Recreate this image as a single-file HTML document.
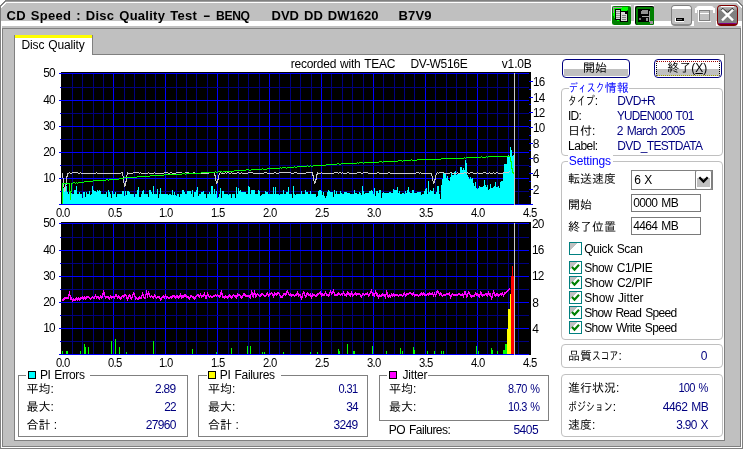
<!DOCTYPE html>
<html lang="ja"><head><meta charset="utf-8"><title>CD Speed : Disc Quality Test</title>
<style>
html,body{margin:0;padding:0;}
body{width:743px;height:449px;position:relative;overflow:hidden;background:#fff;font-family:'Liberation Sans','IPAGothic',sans-serif;font-size:12px;}
.abs,.t,.chart,#win div,#win svg{position:absolute;}
.t{white-space:pre;display:block;}
.k{display:inline-block;transform-origin:0 50%;}
#win{position:absolute;left:0;top:0;width:743px;height:449px;background:#c0c0c0;overflow:hidden;}
.grp{border:1px solid #c0c0c0;border-radius:4px;box-sizing:border-box;}
.sq{border:1px solid #808080;box-sizing:border-box;}
.lg{background:#fff;height:13px;}
.btn{box-sizing:border-box;border:1px solid #000080;border-radius:4px;background:#fff;overflow:hidden;}
.btn i{position:absolute;left:1px;right:1px;top:9px;height:7px;background:#c0c0c0;}
.inp{box-sizing:border-box;border:1px solid #7a7a7a;background:#fff;}
.cb{box-sizing:border-box;width:13px;height:13px;border:1px solid #008080;background:linear-gradient(135deg,#c0c0c0 0,#c0c0c0 32%,#fff 33%);}
</style></head><body>
<div id="win">
<div style="left:0;top:0;width:743px;height:1px;background:#808080"></div>
<div style="left:0;top:1px;width:743px;height:1px;background:#a0a0a0"></div>
<div style="left:0;top:2px;width:743px;height:1px;background:#fff"></div>
<div style="left:0;top:0;width:1px;height:449px;background:#808080"></div>
<div style="left:742px;top:0;width:1px;height:449px;background:#808080"></div>
<div style="left:1px;top:25px;width:1px;height:423px;background:#fff"></div>
<div style="left:741px;top:25px;width:1px;height:423px;background:#fff"></div>
<div style="left:0;top:448px;width:743px;height:1px;background:#808080"></div>
<div style="left:1px;top:447px;width:741px;height:1px;background:#fff"></div>
<div style="left:1px;top:21px;width:741px;height:5px;background:#fff"></div>
<div style="left:2px;top:28px;width:739px;height:419px;border:1px solid #808080;box-sizing:border-box"></div>
<div id="page" style="left:14px;top:54px;width:711px;height:387px;background:#fff;border:1px solid #808080;box-sizing:border-box"></div>
<div id="tab" style="left:14px;top:35px;width:79px;height:20px;background:#fff;border-left:1px solid #808080;border-right:1px solid #808080;box-sizing:border-box"></div>
<div style="left:15px;top:35px;width:77px;height:3px;background:#ffff00"></div>

<svg style="left:611px;top:5px" width="21" height="21" viewBox="0 0 21 21" shape-rendering="crispEdges">
 <path d="M0 0H20V1H1V20H0Z" fill="#fff"/>
 <rect x="1" y="1" width="19" height="19" rx="2.5" fill="#008000" shape-rendering="auto"/>
 <path d="M2 2H17V5H16V13H13V14H8V16H6V15H4V13H3V11H2Z" fill="#00ff00"/>
 <path d="M2 2H11V3H3V8H2Z" fill="#a090a0"/>
 <rect x="4" y="4" width="6" height="11" fill="#000"/>
 <rect x="5" y="5" width="4" height="9" fill="#d8d8d8"/>
 <path d="M5 6H9M5 8H9M5 10H9M5 12H9" stroke="#909090" stroke-width="1" transform="translate(0,0.5)"/>
 <rect x="9" y="6" width="8" height="11" fill="#000"/>
 <path d="M10 7H14V9H16V16H10Z" fill="#d8d8d8"/>
 <path d="M11 10H15M11 12H15M11 14H15" stroke="#808080" stroke-width="1" transform="translate(0,0.5)"/>
</svg>
<svg style="left:634px;top:5px" width="21" height="21" viewBox="0 0 21 21" shape-rendering="crispEdges">
 <path d="M0 0H20V1H1V20H0Z" fill="#fff"/>
 <rect x="1" y="1" width="19" height="19" rx="2" fill="#000" shape-rendering="auto"/>
 <rect x="2" y="2" width="18" height="18" rx="2" fill="#008000" shape-rendering="auto"/>
 <rect x="4" y="4" width="12" height="13" fill="#000"/>
 <path d="M8 5H14V9H7V6H8Z" fill="#909090"/>
 <rect x="8" y="11" width="8" height="1" fill="#a0a0a0"/>
 <rect x="15" y="6" width="1" height="11" fill="#a0a0a0"/>
 <rect x="5" y="13" width="2" height="2" fill="#707070"/>
 <rect x="12" y="13" width="2" height="3" fill="#909090"/>
 <rect x="16" y="16" width="3" height="3" fill="#a090a0"/>
</svg>
<!-- minimise -->
<div style="left:671px;top:5px;width:21px;height:21px;background:#c0c0c0;border:1px solid #808080;border-bottom:2px solid #8c8c8c;border-radius:4px;box-sizing:border-box;overflow:hidden"><div style="left:0;top:0;width:19px;height:3px;background:#fff"></div></div>
<div style="left:675px;top:18px;width:9px;height:4px;background:#fff"></div>
<div style="left:676px;top:18px;width:8px;height:3px;background:#000"></div>
<div style="left:677px;top:19px;width:5px;height:1px;background:#707070"></div>
<!-- maximise (disabled) -->
<div style="left:694px;top:5px;width:22px;height:21px;background:#c0c0c0"></div>
<div style="left:696px;top:6px;width:18px;height:4px;background:#fff;border-radius:3px 3px 0 0"></div>
<div style="left:695px;top:8px;width:2px;height:5px;background:#fff"></div>
<div style="left:713px;top:8px;width:2px;height:5px;background:#fff"></div>
<div style="left:698px;top:10px;width:13px;height:12px;background:#fff"></div>
<div style="left:699px;top:10px;width:12px;height:11px;background:#c0c0c0"></div>
<div style="left:699px;top:10px;width:11px;height:11px;border:1px solid #808080;box-sizing:border-box"></div>
<div style="left:700px;top:13px;width:9px;height:1px;background:#fff"></div>
<!-- close -->
<div style="left:717px;top:5px;width:21px;height:21px;background:linear-gradient(#c4c4c4 0,#a0a0a0 3px,#808080 5px);border:1px solid #800000;border-bottom-width:2px;border-radius:4px;box-sizing:border-box;overflow:hidden"><div style="left:3px;top:0;width:13px;height:1px;background:#fff"></div><div style="left:0;top:17px;width:19px;height:1px;background:#800080"></div></div>
<svg style="left:717px;top:5px" width="21" height="21" viewBox="0 0 21 21"><path d="M5 4.6 L9.5 9 M16 4.6 L11.5 9" stroke="#000" stroke-width="2.3" fill="none" transform="translate(0,-0.9)"/><path d="M5 4.6 L16 15.4 M16 4.6 L5 15.4" stroke="#fff" stroke-width="2.3" fill="none"/></svg>

<svg class="chart" width="743" height="449" viewBox="0 0 743 449" shape-rendering="crispEdges">
<rect x="61" y="72" width="470" height="133" fill="#000"/>
<rect x="61" y="222" width="470" height="133" fill="#000"/>
<rect x="72" y="73" width="1" height="131" fill="#000080"/>
<rect x="82" y="73" width="1" height="131" fill="#000080"/>
<rect x="93" y="73" width="1" height="131" fill="#000080"/>
<rect x="103" y="73" width="1" height="131" fill="#000080"/>
<rect x="113" y="73" width="1" height="131" fill="#0000ff"/>
<rect x="124" y="73" width="1" height="131" fill="#000080"/>
<rect x="134" y="73" width="1" height="131" fill="#000080"/>
<rect x="145" y="73" width="1" height="131" fill="#000080"/>
<rect x="155" y="73" width="1" height="131" fill="#000080"/>
<rect x="165" y="73" width="1" height="131" fill="#0000ff"/>
<rect x="176" y="73" width="1" height="131" fill="#000080"/>
<rect x="186" y="73" width="1" height="131" fill="#000080"/>
<rect x="196" y="73" width="1" height="131" fill="#000080"/>
<rect x="207" y="73" width="1" height="131" fill="#000080"/>
<rect x="217" y="73" width="1" height="131" fill="#0000ff"/>
<rect x="228" y="73" width="1" height="131" fill="#000080"/>
<rect x="238" y="73" width="1" height="131" fill="#000080"/>
<rect x="248" y="73" width="1" height="131" fill="#000080"/>
<rect x="259" y="73" width="1" height="131" fill="#000080"/>
<rect x="269" y="73" width="1" height="131" fill="#0000ff"/>
<rect x="279" y="73" width="1" height="131" fill="#000080"/>
<rect x="290" y="73" width="1" height="131" fill="#000080"/>
<rect x="300" y="73" width="1" height="131" fill="#000080"/>
<rect x="311" y="73" width="1" height="131" fill="#000080"/>
<rect x="321" y="73" width="1" height="131" fill="#0000ff"/>
<rect x="331" y="73" width="1" height="131" fill="#000080"/>
<rect x="342" y="73" width="1" height="131" fill="#000080"/>
<rect x="352" y="73" width="1" height="131" fill="#000080"/>
<rect x="363" y="73" width="1" height="131" fill="#000080"/>
<rect x="373" y="73" width="1" height="131" fill="#0000ff"/>
<rect x="383" y="73" width="1" height="131" fill="#000080"/>
<rect x="394" y="73" width="1" height="131" fill="#000080"/>
<rect x="404" y="73" width="1" height="131" fill="#000080"/>
<rect x="414" y="73" width="1" height="131" fill="#000080"/>
<rect x="425" y="73" width="1" height="131" fill="#0000ff"/>
<rect x="435" y="73" width="1" height="131" fill="#000080"/>
<rect x="446" y="73" width="1" height="131" fill="#000080"/>
<rect x="456" y="73" width="1" height="131" fill="#000080"/>
<rect x="466" y="73" width="1" height="131" fill="#000080"/>
<rect x="477" y="73" width="1" height="131" fill="#0000ff"/>
<rect x="487" y="73" width="1" height="131" fill="#000080"/>
<rect x="497" y="73" width="1" height="131" fill="#000080"/>
<rect x="508" y="73" width="1" height="131" fill="#000080"/>
<rect x="518" y="73" width="1" height="131" fill="#000080"/>
<rect x="61" y="73" width="468" height="1" fill="#0000ff"/>
<rect x="59" y="73" width="2" height="1" fill="#0000ff"/>
<rect x="61" y="87" width="468" height="1" fill="#000080"/>
<rect x="60" y="87" width="1" height="1" fill="#0000ff"/>
<rect x="61" y="100" width="468" height="1" fill="#0000ff"/>
<rect x="59" y="100" width="2" height="1" fill="#0000ff"/>
<rect x="61" y="113" width="468" height="1" fill="#000080"/>
<rect x="60" y="113" width="1" height="1" fill="#0000ff"/>
<rect x="61" y="126" width="468" height="1" fill="#0000ff"/>
<rect x="59" y="126" width="2" height="1" fill="#0000ff"/>
<rect x="61" y="139" width="468" height="1" fill="#000080"/>
<rect x="60" y="139" width="1" height="1" fill="#0000ff"/>
<rect x="61" y="152" width="468" height="1" fill="#0000ff"/>
<rect x="59" y="152" width="2" height="1" fill="#0000ff"/>
<rect x="61" y="165" width="468" height="1" fill="#000080"/>
<rect x="60" y="165" width="1" height="1" fill="#0000ff"/>
<rect x="61" y="178" width="468" height="1" fill="#0000ff"/>
<rect x="59" y="178" width="2" height="1" fill="#0000ff"/>
<rect x="61" y="191" width="468" height="1" fill="#000080"/>
<rect x="60" y="191" width="1" height="1" fill="#0000ff"/>
<rect x="61" y="204" width="468" height="1" fill="#0000ff"/>
<rect x="59" y="204" width="2" height="1" fill="#0000ff"/>
<rect x="529" y="204" width="4" height="1" fill="#0000ff"/>
<rect x="529" y="196" width="2" height="1" fill="#0000ff"/>
<rect x="529" y="189" width="4" height="1" fill="#0000ff"/>
<rect x="529" y="181" width="2" height="1" fill="#0000ff"/>
<rect x="529" y="173" width="4" height="1" fill="#0000ff"/>
<rect x="529" y="166" width="2" height="1" fill="#0000ff"/>
<rect x="529" y="158" width="4" height="1" fill="#0000ff"/>
<rect x="529" y="150" width="2" height="1" fill="#0000ff"/>
<rect x="529" y="143" width="4" height="1" fill="#0000ff"/>
<rect x="529" y="135" width="2" height="1" fill="#0000ff"/>
<rect x="529" y="127" width="4" height="1" fill="#0000ff"/>
<rect x="529" y="120" width="2" height="1" fill="#0000ff"/>
<rect x="529" y="112" width="4" height="1" fill="#0000ff"/>
<rect x="529" y="104" width="2" height="1" fill="#0000ff"/>
<rect x="529" y="97" width="4" height="1" fill="#0000ff"/>
<rect x="529" y="89" width="2" height="1" fill="#0000ff"/>
<rect x="529" y="81" width="4" height="1" fill="#0000ff"/>
<path d="M63 204V188H64V189H65V184H66V186H67V192H68V194H69V185H70V195H71V193H72V194H73V194H74V190H75V190H76V186H77V194H78V194H79V192H80V194H81V194H82V198H83V192H84V192H85V197H86V192H87V194H88V194H89V191H90V195H91V194H92V186H93V190H94V191H95V191H96V192H97V190H98V191H99V190H100V191H101V194H102V194H103V194H104V194H105V194H106V192H107V197H108V190H109V192H110V194H111V198H112V191H113V194H114V194H115V192H116V197H117V194H118V194H119V194H120V194H121V194H122V191H123V191H124V196H125V191H126V195H127V191H128V191H129V192H130V194H131V194H132V194H133V194H134V197H135V194H136V194H137V190H138V187H139V197H140V197H141V194H142V191H143V190H144V194H145V194H146V194H147V194H148V197H149V190H150V190H151V192H152V194H153V186H154V194H155V194H156V194H157V189H158V198H159V194H160V188H161V194H162V194H163V194H164V194H165V194H166V194H167V194H168V195H169V194H170V194H171V195H172V190H173V195H174V192H175V195H176V196H177V194H178V194H179V197H180V194H181V194H182V190H183V190H184V192H185V194H186V194H187V191H188V191H189V191H190V191H191V194H192V190H193V197H194V192H195V192H196V190H197V187H198V196H199V194H200V194H201V192H202V192H203V191H204V194H205V194H206V198H207V194H208V194H209V192H210V194H211V186H212V186H213V194H214V189H215V194H216V191H217V198H218V197H219V194H220V188H221V198H222V191H223V191H224V194H225V194H226V194H227V194H228V195H229V194H230V194H231V198H232V194H233V194H234V194H235V198H236V187H237V194H238V188H239V191H240V190H241V192H242V192H243V192H244V192H245V192H246V194H247V194H248V186H249V187H250V194H251V190H252V190H253V190H254V190H255V194H256V194H257V194H258V190H259V191H260V196H261V195H262V194H263V194H264V194H265V191H266V192H267V192H268V194H269V194H270V194H271V194H272V194H273V187H274V194H275V187H276V194H277V194H278V194H279V195H280V194H281V194H282V194H283V190H284V194H285V194H286V192H287V192H288V187H289V194H290V194H291V194H292V198H293V186H294V194H295V195H296V194H297V194H298V194H299V194H300V194H301V191H302V194H303V194H304V194H305V190H306V192H307V192H308V194H309V194H310V191H311V194H312V194H313V194H314V194H315V194H316V197H317V196H318V191H319V190H320V190H321V191H322V195H323V192H324V196H325V198H326V196H327V192H328V190H329V191H330V192H331V192H332V192H333V197H334V190H335V194H336V191H337V194H338V194H339V194H340V191H341V193H342V194H343V194H344V192H345V192H346V192H347V193H348V193H349V193H350V194H351V194H352V194H353V194H354V190H355V193H356V193H357V194H358V194H359V192H360V193H361V195H362V186H363V191H364V194H365V193H366V193H367V193H368V193H369V191H370V191H371V190H372V191H373V194H374V188H375V196H376V191H377V191H378V193H379V190H380V190H381V198H382V193H383V192H384V193H385V193H386V193H387V193H388V193H389V192H390V192H391V193H392V193H393V189H394V190H395V190H396V190H397V187H398V193H399V191H400V194H401V194H402V193H403V193H404V194H405V191H406V193H407V190H408V187H409V192H410V193H411V193H412V190H413V190H414V193H415V193H416V193H417V192H418V192H419V192H420V192H421V195H422V194H423V194H424V191H425V189H426V188H427V194H428V181H429V192H430V190H431V191H432V191H433V188H434V194H435V194H436V192H437V186H438V186H439V194H440V199H441V185H442V179H443V173H444V173H445V174H446V178H447V176H448V180H449V181H450V177H451V173H452V175H453V175H454V172H455V171H456V175H457V174H458V173H459V174H460V167H461V167H462V170H463V168H464V170H465V160H466V163H467V175H468V177H469V179H470V177H471V179H472V178H473V183H474V186H475V182H476V188H477V189H478V188H479V186H480V187H481V187H482V187H483V186H484V180H485V185H486V187H487V185H488V190H489V189H490V184H491V188H492V188H493V187H494V186H495V182H496V187H497V187H498V186H499V188H500V182H501V181H502V181H503V173H504V164H505V164H506V164H507V156H508V155H509V156H510V147H511V150H512V156H513V155H514V156H515V204Z" fill="#00ffff"/>
<path d="M62 173h1v5h-1zM63 178h1v9h-1zM64 187h1v5h-1zM65 185h1v6h-1zM66 176h1v9h-1zM67 173h1v4h-1zM68 173h1v1h-1zM69 172h1v1h-1zM70 173h1v1h-1zM71 173h1v1h-1zM72 172h1v1h-1zM73 172h1v1h-1zM74 172h1v1h-1zM75 172h1v1h-1zM76 172h1v1h-1zM77 172h1v1h-1zM78 173h1v1h-1zM79 173h1v1h-1zM80 172h1v1h-1zM81 173h1v1h-1zM82 173h1v1h-1zM83 173h1v1h-1zM84 173h1v1h-1zM85 173h1v1h-1zM86 173h1v1h-1zM87 173h1v1h-1zM88 173h1v1h-1zM89 173h1v1h-1zM90 173h1v1h-1zM91 173h1v1h-1zM92 173h1v1h-1zM93 173h1v1h-1zM94 173h1v1h-1zM95 173h1v1h-1zM96 172h1v1h-1zM97 173h1v1h-1zM98 173h1v1h-1zM99 173h1v1h-1zM100 173h1v1h-1zM101 173h1v1h-1zM102 173h1v1h-1zM103 173h1v1h-1zM104 173h1v1h-1zM105 173h1v1h-1zM106 173h1v1h-1zM107 173h1v1h-1zM108 173h1v1h-1zM109 173h1v1h-1zM110 173h1v1h-1zM111 173h1v1h-1zM112 173h1v1h-1zM113 173h1v1h-1zM114 173h1v1h-1zM115 173h1v1h-1zM116 173h1v1h-1zM117 173h1v1h-1zM118 173h1v1h-1zM119 173h1v1h-1zM120 173h1v1h-1zM121 172h1v1h-1zM122 172h1v4h-1zM123 176h1v7h-1zM124 183h1v4h-1zM125 181h1v5h-1zM126 175h1v7h-1zM127 172h1v3h-1zM128 173h1v1h-1zM129 173h1v1h-1zM130 173h1v1h-1zM131 173h1v1h-1zM132 173h1v1h-1zM133 172h1v1h-1zM134 172h1v1h-1zM135 172h1v1h-1zM136 172h1v1h-1zM137 172h1v1h-1zM138 172h1v1h-1zM139 173h1v1h-1zM140 172h1v1h-1zM141 173h1v1h-1zM142 173h1v1h-1zM143 173h1v1h-1zM144 173h1v1h-1zM145 173h1v1h-1zM146 173h1v1h-1zM147 173h1v1h-1zM148 172h1v1h-1zM149 173h1v1h-1zM150 173h1v1h-1zM151 173h1v1h-1zM152 173h1v1h-1zM153 173h1v1h-1zM154 172h1v1h-1zM155 173h1v1h-1zM156 173h1v1h-1zM157 173h1v1h-1zM158 173h1v1h-1zM159 173h1v1h-1zM160 173h1v1h-1zM161 173h1v1h-1zM162 173h1v1h-1zM163 173h1v1h-1zM164 172h1v1h-1zM165 172h1v1h-1zM166 172h1v1h-1zM167 172h1v1h-1zM168 173h1v1h-1zM169 173h1v1h-1zM170 172h1v1h-1zM171 172h1v1h-1zM172 173h1v1h-1zM173 173h1v1h-1zM174 173h1v1h-1zM175 173h1v1h-1zM176 172h1v1h-1zM177 172h1v1h-1zM178 172h1v1h-1zM179 172h1v1h-1zM180 172h1v1h-1zM181 172h1v1h-1zM182 173h1v1h-1zM183 173h1v1h-1zM184 173h1v1h-1zM185 172h1v1h-1zM186 172h1v1h-1zM187 172h1v1h-1zM188 172h1v1h-1zM189 173h1v1h-1zM190 173h1v1h-1zM191 173h1v1h-1zM192 173h1v1h-1zM193 172h1v1h-1zM194 172h1v1h-1zM195 173h1v1h-1zM196 173h1v1h-1zM197 173h1v1h-1zM198 173h1v1h-1zM199 173h1v1h-1zM200 173h1v1h-1zM201 173h1v1h-1zM202 173h1v1h-1zM203 173h1v1h-1zM204 173h1v1h-1zM205 173h1v1h-1zM206 173h1v1h-1zM207 173h1v1h-1zM208 173h1v1h-1zM209 172h1v1h-1zM210 172h1v1h-1zM211 172h1v1h-1zM212 172h1v1h-1zM213 172h1v1h-1zM214 172h1v4h-1zM215 175h1v6h-1zM216 181h1v3h-1zM217 179h1v4h-1zM218 175h1v5h-1zM219 173h1v2h-1zM220 172h1v1h-1zM221 173h1v1h-1zM222 173h1v1h-1zM223 173h1v1h-1zM224 173h1v1h-1zM225 172h1v1h-1zM226 173h1v1h-1zM227 172h1v1h-1zM228 172h1v1h-1zM229 173h1v1h-1zM230 173h1v1h-1zM231 172h1v1h-1zM232 173h1v1h-1zM233 173h1v1h-1zM234 173h1v1h-1zM235 173h1v1h-1zM236 173h1v1h-1zM237 172h1v1h-1zM238 172h1v1h-1zM239 173h1v1h-1zM240 173h1v1h-1zM241 172h1v1h-1zM242 173h1v1h-1zM243 173h1v1h-1zM244 173h1v1h-1zM245 173h1v1h-1zM246 173h1v1h-1zM247 173h1v1h-1zM248 172h1v1h-1zM249 172h1v1h-1zM250 172h1v1h-1zM251 172h1v1h-1zM252 172h1v1h-1zM253 173h1v1h-1zM254 173h1v1h-1zM255 173h1v1h-1zM256 173h1v1h-1zM257 173h1v1h-1zM258 173h1v1h-1zM259 173h1v1h-1zM260 173h1v1h-1zM261 173h1v1h-1zM262 173h1v1h-1zM263 173h1v1h-1zM264 172h1v1h-1zM265 172h1v1h-1zM266 172h1v1h-1zM267 173h1v1h-1zM268 173h1v1h-1zM269 173h1v1h-1zM270 173h1v1h-1zM271 173h1v1h-1zM272 173h1v1h-1zM273 173h1v1h-1zM274 172h1v1h-1zM275 172h1v1h-1zM276 173h1v1h-1zM277 173h1v1h-1zM278 173h1v1h-1zM279 172h1v1h-1zM280 172h1v1h-1zM281 172h1v1h-1zM282 172h1v1h-1zM283 172h1v1h-1zM284 172h1v1h-1zM285 172h1v1h-1zM286 172h1v1h-1zM287 172h1v1h-1zM288 172h1v1h-1zM289 172h1v1h-1zM290 172h1v1h-1zM291 173h1v1h-1zM292 173h1v1h-1zM293 173h1v1h-1zM294 172h1v1h-1zM295 172h1v1h-1zM296 172h1v1h-1zM297 173h1v1h-1zM298 173h1v1h-1zM299 173h1v1h-1zM300 173h1v1h-1zM301 173h1v1h-1zM302 173h1v1h-1zM303 173h1v1h-1zM304 173h1v1h-1zM305 173h1v1h-1zM306 172h1v1h-1zM307 172h1v1h-1zM308 172h1v1h-1zM309 172h1v1h-1zM310 172h1v1h-1zM311 172h1v1h-1zM312 172h1v4h-1zM313 175h1v6h-1zM314 181h1v3h-1zM315 179h1v4h-1zM316 174h1v6h-1zM317 172h1v3h-1zM318 173h1v1h-1zM319 173h1v1h-1zM320 173h1v1h-1zM321 172h1v1h-1zM322 173h1v1h-1zM323 173h1v1h-1zM324 173h1v1h-1zM325 173h1v1h-1zM326 173h1v1h-1zM327 173h1v1h-1zM328 173h1v1h-1zM329 173h1v1h-1zM330 173h1v1h-1zM331 173h1v1h-1zM332 173h1v1h-1zM333 173h1v1h-1zM334 172h1v1h-1zM335 172h1v1h-1zM336 172h1v1h-1zM337 172h1v1h-1zM338 173h1v1h-1zM339 172h1v1h-1zM340 172h1v1h-1zM341 173h1v1h-1zM342 172h1v1h-1zM343 173h1v1h-1zM344 173h1v1h-1zM345 173h1v1h-1zM346 173h1v1h-1zM347 172h1v1h-1zM348 172h1v1h-1zM349 173h1v1h-1zM350 173h1v1h-1zM351 173h1v1h-1zM352 173h1v1h-1zM353 173h1v1h-1zM354 173h1v1h-1zM355 173h1v1h-1zM356 173h1v1h-1zM357 172h1v1h-1zM358 172h1v1h-1zM359 172h1v1h-1zM360 172h1v1h-1zM361 173h1v1h-1zM362 173h1v1h-1zM363 172h1v1h-1zM364 172h1v1h-1zM365 172h1v1h-1zM366 172h1v1h-1zM367 172h1v1h-1zM368 173h1v1h-1zM369 173h1v1h-1zM370 173h1v1h-1zM371 173h1v1h-1zM372 173h1v1h-1zM373 173h1v1h-1zM374 173h1v1h-1zM375 173h1v1h-1zM376 173h1v1h-1zM377 172h1v1h-1zM378 172h1v1h-1zM379 173h1v1h-1zM380 173h1v1h-1zM381 173h1v1h-1zM382 173h1v1h-1zM383 173h1v1h-1zM384 173h1v1h-1zM385 173h1v1h-1zM386 173h1v1h-1zM387 173h1v1h-1zM388 172h1v1h-1zM389 172h1v1h-1zM390 173h1v1h-1zM391 173h1v1h-1zM392 173h1v1h-1zM393 173h1v1h-1zM394 173h1v1h-1zM395 173h1v1h-1zM396 173h1v1h-1zM397 173h1v1h-1zM398 173h1v1h-1zM399 173h1v1h-1zM400 173h1v1h-1zM401 173h1v1h-1zM402 173h1v1h-1zM403 173h1v1h-1zM404 173h1v1h-1zM405 173h1v1h-1zM406 173h1v1h-1zM407 173h1v1h-1zM408 173h1v1h-1zM409 173h1v1h-1zM410 173h1v1h-1zM411 173h1v1h-1zM412 173h1v1h-1zM413 173h1v1h-1zM414 173h1v1h-1zM415 173h1v1h-1zM416 172h1v1h-1zM417 172h1v1h-1zM418 172h1v1h-1zM419 173h1v1h-1zM420 172h1v1h-1zM421 173h1v1h-1zM422 173h1v1h-1zM423 173h1v1h-1zM424 173h1v1h-1zM425 173h1v1h-1zM426 173h1v1h-1zM427 173h1v1h-1zM428 173h1v1h-1zM429 173h1v1h-1zM430 173h1v1h-1zM431 173h1v3h-1zM432 176h1v5h-1zM433 181h1v3h-1zM434 179h1v4h-1zM435 175h1v5h-1zM436 173h1v2h-1zM437 172h1v1h-1zM438 173h1v1h-1zM439 172h1v1h-1zM440 172h1v1h-1zM441 172h1v1h-1zM442 172h1v1h-1zM443 172h1v1h-1zM444 173h1v1h-1zM445 173h1v1h-1zM446 173h1v1h-1zM447 173h1v1h-1zM448 173h1v1h-1zM449 173h1v1h-1zM450 172h1v1h-1zM451 172h1v1h-1zM452 173h1v1h-1zM453 173h1v1h-1zM454 173h1v1h-1zM455 173h1v1h-1zM456 173h1v1h-1zM457 172h1v1h-1zM458 173h1v1h-1zM459 173h1v1h-1zM460 173h1v1h-1zM461 173h1v1h-1zM462 173h1v1h-1zM463 173h1v1h-1zM464 172h1v1h-1zM465 172h1v1h-1zM466 173h1v1h-1zM467 172h1v1h-1zM468 173h1v1h-1zM469 173h1v1h-1zM470 172h1v1h-1zM471 172h1v1h-1zM472 172h1v1h-1zM473 173h1v1h-1zM474 173h1v1h-1zM475 173h1v1h-1zM476 173h1v1h-1zM477 172h1v1h-1zM478 173h1v1h-1zM479 173h1v1h-1zM480 173h1v1h-1zM481 173h1v1h-1zM482 173h1v1h-1zM483 172h1v1h-1zM484 172h1v1h-1zM485 172h1v1h-1zM486 173h1v1h-1zM487 173h1v1h-1zM488 173h1v1h-1zM489 172h1v1h-1zM490 173h1v1h-1zM491 173h1v1h-1zM492 173h1v1h-1zM493 172h1v1h-1zM494 173h1v1h-1zM495 173h1v1h-1zM496 172h1v1h-1zM497 172h1v1h-1zM498 173h1v1h-1zM499 173h1v1h-1zM500 173h1v1h-1zM501 173h1v1h-1zM502 173h1v1h-1zM503 172h1v1h-1zM504 172h1v1h-1zM505 172h1v1h-1zM506 172h1v1h-1zM507 172h1v1h-1zM508 172h1v1h-1zM509 171h1v1h-1z" fill="#c8c8c8"/>
<rect x="62" y="183" width="1" height="21" fill="#00ff00"/>
<path d="M62 183h1v1h-1zM63 183h1v1h-1zM64 183h1v1h-1zM65 183h1v1h-1zM66 183h1v1h-1zM67 183h1v1h-1zM68 183h1v1h-1zM69 183h1v9h-1zM70 191h1v9h-1zM71 183h1v9h-1zM72 183h1v1h-1zM73 182h1v1h-1zM74 182h1v1h-1zM75 183h1v1h-1zM76 182h1v1h-1zM77 183h1v1h-1zM78 182h1v1h-1zM79 182h1v1h-1zM80 182h1v1h-1zM81 182h1v1h-1zM82 182h1v1h-1zM83 182h1v1h-1zM84 181h1v1h-1zM85 181h1v1h-1zM86 181h1v1h-1zM87 181h1v1h-1zM88 181h1v1h-1zM89 181h1v1h-1zM90 181h1v1h-1zM91 181h1v1h-1zM92 181h1v1h-1zM93 180h1v1h-1zM94 180h1v1h-1zM95 180h1v1h-1zM96 180h1v1h-1zM97 180h1v1h-1zM98 180h1v1h-1zM99 180h1v1h-1zM100 180h1v1h-1zM101 180h1v1h-1zM102 180h1v1h-1zM103 180h1v1h-1zM104 180h1v1h-1zM105 180h1v1h-1zM106 179h1v1h-1zM107 179h1v1h-1zM108 180h1v1h-1zM109 179h1v1h-1zM110 179h1v1h-1zM111 179h1v1h-1zM112 179h1v1h-1zM113 179h1v1h-1zM114 179h1v1h-1zM115 179h1v1h-1zM116 179h1v1h-1zM117 179h1v1h-1zM118 179h1v1h-1zM119 178h1v1h-1zM120 178h1v1h-1zM121 178h1v1h-1zM122 178h1v1h-1zM123 178h1v1h-1zM124 177h1v1h-1zM125 177h1v1h-1zM126 177h1v1h-1zM127 177h1v1h-1zM128 177h1v1h-1zM129 177h1v1h-1zM130 177h1v1h-1zM131 177h1v1h-1zM132 177h1v1h-1zM133 177h1v1h-1zM134 177h1v1h-1zM135 177h1v1h-1zM136 177h1v1h-1zM137 176h1v1h-1zM138 176h1v1h-1zM139 176h1v1h-1zM140 176h1v1h-1zM141 176h1v1h-1zM142 176h1v1h-1zM143 176h1v1h-1zM144 176h1v1h-1zM145 176h1v1h-1zM146 176h1v1h-1zM147 176h1v1h-1zM148 176h1v1h-1zM149 176h1v1h-1zM150 175h1v1h-1zM151 175h1v1h-1zM152 175h1v1h-1zM153 175h1v1h-1zM154 175h1v1h-1zM155 175h1v1h-1zM156 175h1v1h-1zM157 175h1v1h-1zM158 175h1v1h-1zM159 175h1v1h-1zM160 175h1v1h-1zM161 175h1v1h-1zM162 175h1v1h-1zM163 175h1v1h-1zM164 174h1v1h-1zM165 174h1v1h-1zM166 174h1v1h-1zM167 174h1v1h-1zM168 174h1v1h-1zM169 174h1v1h-1zM170 174h1v1h-1zM171 174h1v1h-1zM172 174h1v1h-1zM173 174h1v1h-1zM174 174h1v1h-1zM175 174h1v1h-1zM176 174h1v1h-1zM177 174h1v1h-1zM178 174h1v1h-1zM179 174h1v1h-1zM180 174h1v1h-1zM181 174h1v1h-1zM182 173h1v1h-1zM183 173h1v1h-1zM184 173h1v1h-1zM185 174h1v1h-1zM186 173h1v1h-1zM187 173h1v1h-1zM188 173h1v1h-1zM189 173h1v1h-1zM190 173h1v1h-1zM191 173h1v1h-1zM192 173h1v1h-1zM193 173h1v1h-1zM194 173h1v1h-1zM195 173h1v1h-1zM196 173h1v1h-1zM197 173h1v1h-1zM198 173h1v1h-1zM199 173h1v1h-1zM200 173h1v1h-1zM201 172h1v1h-1zM202 172h1v1h-1zM203 172h1v1h-1zM204 172h1v1h-1zM205 172h1v1h-1zM206 172h1v1h-1zM207 172h1v1h-1zM208 172h1v1h-1zM209 172h1v1h-1zM210 172h1v1h-1zM211 172h1v1h-1zM212 172h1v1h-1zM213 172h1v1h-1zM214 172h1v1h-1zM215 171h1v1h-1zM216 172h1v1h-1zM217 172h1v1h-1zM218 171h1v1h-1zM219 171h1v1h-1zM220 171h1v1h-1zM221 171h1v1h-1zM222 172h1v1h-1zM223 171h1v1h-1zM224 171h1v1h-1zM225 171h1v1h-1zM226 171h1v1h-1zM227 171h1v1h-1zM228 171h1v1h-1zM229 171h1v1h-1zM230 171h1v1h-1zM231 171h1v1h-1zM232 171h1v1h-1zM233 171h1v1h-1zM234 170h1v1h-1zM235 170h1v1h-1zM236 170h1v1h-1zM237 170h1v1h-1zM238 170h1v1h-1zM239 170h1v1h-1zM240 170h1v1h-1zM241 170h1v1h-1zM242 170h1v1h-1zM243 170h1v1h-1zM244 170h1v1h-1zM245 170h1v1h-1zM246 169h1v1h-1zM247 169h1v1h-1zM248 169h1v1h-1zM249 170h1v1h-1zM250 170h1v1h-1zM251 169h1v1h-1zM252 169h1v1h-1zM253 169h1v1h-1zM254 169h1v1h-1zM255 169h1v1h-1zM256 169h1v1h-1zM257 169h1v1h-1zM258 169h1v1h-1zM259 169h1v1h-1zM260 169h1v1h-1zM261 169h1v1h-1zM262 168h1v1h-1zM263 169h1v1h-1zM264 169h1v1h-1zM265 169h1v1h-1zM266 169h1v1h-1zM267 168h1v1h-1zM268 168h1v1h-1zM269 168h1v1h-1zM270 168h1v1h-1zM271 168h1v1h-1zM272 168h1v1h-1zM273 168h1v1h-1zM274 168h1v1h-1zM275 168h1v1h-1zM276 168h1v1h-1zM277 168h1v1h-1zM278 168h1v1h-1zM279 168h1v1h-1zM280 167h1v1h-1zM281 168h1v1h-1zM282 167h1v1h-1zM283 167h1v1h-1zM284 167h1v1h-1zM285 167h1v1h-1zM286 168h1v1h-1zM287 167h1v1h-1zM288 167h1v1h-1zM289 167h1v1h-1zM290 167h1v1h-1zM291 167h1v1h-1zM292 167h1v1h-1zM293 167h1v1h-1zM294 166h1v1h-1zM295 167h1v1h-1zM296 167h1v1h-1zM297 166h1v1h-1zM298 166h1v1h-1zM299 166h1v1h-1zM300 166h1v1h-1zM301 166h1v1h-1zM302 166h1v1h-1zM303 166h1v1h-1zM304 166h1v1h-1zM305 166h1v1h-1zM306 166h1v1h-1zM307 165h1v1h-1zM308 166h1v1h-1zM309 166h1v1h-1zM310 165h1v1h-1zM311 166h1v1h-1zM312 166h1v1h-1zM313 165h1v1h-1zM314 165h1v1h-1zM315 165h1v1h-1zM316 165h1v1h-1zM317 165h1v1h-1zM318 165h1v1h-1zM319 165h1v1h-1zM320 165h1v1h-1zM321 165h1v1h-1zM322 165h1v1h-1zM323 165h1v1h-1zM324 165h1v1h-1zM325 165h1v1h-1zM326 164h1v1h-1zM327 164h1v1h-1zM328 164h1v1h-1zM329 164h1v1h-1zM330 164h1v1h-1zM331 164h1v1h-1zM332 164h1v1h-1zM333 164h1v1h-1zM334 164h1v1h-1zM335 164h1v1h-1zM336 164h1v1h-1zM337 163h1v1h-1zM338 163h1v1h-1zM339 164h1v1h-1zM340 164h1v1h-1zM341 163h1v1h-1zM342 163h1v1h-1zM343 163h1v1h-1zM344 163h1v1h-1zM345 163h1v1h-1zM346 163h1v1h-1zM347 163h1v1h-1zM348 163h1v1h-1zM349 163h1v1h-1zM350 163h1v1h-1zM351 163h1v1h-1zM352 163h1v1h-1zM353 163h1v1h-1zM354 163h1v1h-1zM355 163h1v1h-1zM356 163h1v1h-1zM357 162h1v1h-1zM358 163h1v1h-1zM359 162h1v1h-1zM360 162h1v1h-1zM361 162h1v1h-1zM362 162h1v1h-1zM363 163h1v1h-1zM364 162h1v1h-1zM365 162h1v1h-1zM366 162h1v1h-1zM367 162h1v1h-1zM368 162h1v1h-1zM369 162h1v1h-1zM370 162h1v1h-1zM371 162h1v1h-1zM372 162h1v1h-1zM373 162h1v1h-1zM374 162h1v1h-1zM375 162h1v1h-1zM376 162h1v1h-1zM377 162h1v1h-1zM378 162h1v1h-1zM379 161h1v1h-1zM380 161h1v1h-1zM381 161h1v1h-1zM382 162h1v1h-1zM383 161h1v1h-1zM384 161h1v1h-1zM385 161h1v1h-1zM386 161h1v1h-1zM387 161h1v1h-1zM388 161h1v1h-1zM389 161h1v1h-1zM390 161h1v1h-1zM391 161h1v1h-1zM392 161h1v1h-1zM393 161h1v1h-1zM394 161h1v1h-1zM395 161h1v1h-1zM396 161h1v1h-1zM397 161h1v1h-1zM398 160h1v1h-1zM399 160h1v1h-1zM400 160h1v1h-1zM401 160h1v1h-1zM402 161h1v1h-1zM403 160h1v1h-1zM404 160h1v1h-1zM405 160h1v1h-1zM406 160h1v1h-1zM407 160h1v1h-1zM408 160h1v1h-1zM409 160h1v1h-1zM410 160h1v1h-1zM411 159h1v1h-1zM412 160h1v1h-1zM413 160h1v1h-1zM414 160h1v1h-1zM415 160h1v1h-1zM416 160h1v1h-1zM417 159h1v1h-1zM418 159h1v1h-1zM419 159h1v1h-1zM420 159h1v1h-1zM421 159h1v1h-1zM422 159h1v1h-1zM423 159h1v1h-1zM424 159h1v1h-1zM425 159h1v1h-1zM426 159h1v1h-1zM427 159h1v1h-1zM428 159h1v1h-1zM429 159h1v1h-1zM430 159h1v1h-1zM431 159h1v1h-1zM432 159h1v1h-1zM433 159h1v1h-1zM434 159h1v1h-1zM435 159h1v1h-1zM436 159h1v1h-1zM437 159h1v1h-1zM438 159h1v1h-1zM439 159h1v1h-1zM440 159h1v1h-1zM441 158h1v1h-1zM442 158h1v1h-1zM443 158h1v1h-1zM444 158h1v1h-1zM445 158h1v1h-1zM446 158h1v1h-1zM447 158h1v1h-1zM448 158h1v1h-1zM449 158h1v1h-1zM450 158h1v1h-1zM451 158h1v1h-1zM452 158h1v1h-1zM453 158h1v1h-1zM454 158h1v1h-1zM455 158h1v1h-1zM456 158h1v1h-1zM457 158h1v1h-1zM458 158h1v1h-1zM459 158h1v1h-1zM460 158h1v1h-1zM461 158h1v1h-1zM462 158h1v1h-1zM463 158h1v1h-1zM464 157h1v1h-1zM465 158h1v1h-1zM466 157h1v1h-1zM467 157h1v1h-1zM468 157h1v1h-1zM469 157h1v1h-1zM470 157h1v1h-1zM471 157h1v1h-1zM472 157h1v1h-1zM473 157h1v1h-1zM474 157h1v1h-1zM475 157h1v1h-1zM476 157h1v1h-1zM477 157h1v1h-1zM478 157h1v1h-1zM479 157h1v1h-1zM480 157h1v1h-1zM481 156h1v1h-1zM482 157h1v1h-1zM483 157h1v1h-1zM484 157h1v1h-1zM485 157h1v1h-1zM486 156h1v1h-1zM487 157h1v1h-1zM488 156h1v1h-1zM489 156h1v1h-1zM490 156h1v1h-1zM491 156h1v1h-1zM492 156h1v1h-1zM493 156h1v1h-1zM494 156h1v1h-1zM495 156h1v1h-1zM496 156h1v1h-1zM497 156h1v1h-1zM498 156h1v1h-1zM499 156h1v1h-1zM500 156h1v1h-1zM501 156h1v1h-1zM502 156h1v1h-1zM503 156h1v1h-1zM504 156h1v1h-1zM505 156h1v1h-1zM506 156h1v1h-1zM507 156h1v1h-1zM508 156h1v1h-1zM509 156h1v1h-1zM510 157h1v5h-1zM511 161h1v8h-1zM512 168h1v5h-1zM513 172h1v2h-1z" fill="#00ff00"/>
<rect x="514" y="73" width="1" height="132" fill="#c8c8c8"/>
<rect x="72" y="223" width="1" height="131" fill="#000080"/>
<rect x="82" y="223" width="1" height="131" fill="#000080"/>
<rect x="93" y="223" width="1" height="131" fill="#000080"/>
<rect x="103" y="223" width="1" height="131" fill="#000080"/>
<rect x="113" y="223" width="1" height="131" fill="#0000ff"/>
<rect x="124" y="223" width="1" height="131" fill="#000080"/>
<rect x="134" y="223" width="1" height="131" fill="#000080"/>
<rect x="145" y="223" width="1" height="131" fill="#000080"/>
<rect x="155" y="223" width="1" height="131" fill="#000080"/>
<rect x="165" y="223" width="1" height="131" fill="#0000ff"/>
<rect x="176" y="223" width="1" height="131" fill="#000080"/>
<rect x="186" y="223" width="1" height="131" fill="#000080"/>
<rect x="196" y="223" width="1" height="131" fill="#000080"/>
<rect x="207" y="223" width="1" height="131" fill="#000080"/>
<rect x="217" y="223" width="1" height="131" fill="#0000ff"/>
<rect x="228" y="223" width="1" height="131" fill="#000080"/>
<rect x="238" y="223" width="1" height="131" fill="#000080"/>
<rect x="248" y="223" width="1" height="131" fill="#000080"/>
<rect x="259" y="223" width="1" height="131" fill="#000080"/>
<rect x="269" y="223" width="1" height="131" fill="#0000ff"/>
<rect x="279" y="223" width="1" height="131" fill="#000080"/>
<rect x="290" y="223" width="1" height="131" fill="#000080"/>
<rect x="300" y="223" width="1" height="131" fill="#000080"/>
<rect x="311" y="223" width="1" height="131" fill="#000080"/>
<rect x="321" y="223" width="1" height="131" fill="#0000ff"/>
<rect x="331" y="223" width="1" height="131" fill="#000080"/>
<rect x="342" y="223" width="1" height="131" fill="#000080"/>
<rect x="352" y="223" width="1" height="131" fill="#000080"/>
<rect x="363" y="223" width="1" height="131" fill="#000080"/>
<rect x="373" y="223" width="1" height="131" fill="#0000ff"/>
<rect x="383" y="223" width="1" height="131" fill="#000080"/>
<rect x="394" y="223" width="1" height="131" fill="#000080"/>
<rect x="404" y="223" width="1" height="131" fill="#000080"/>
<rect x="414" y="223" width="1" height="131" fill="#000080"/>
<rect x="425" y="223" width="1" height="131" fill="#0000ff"/>
<rect x="435" y="223" width="1" height="131" fill="#000080"/>
<rect x="446" y="223" width="1" height="131" fill="#000080"/>
<rect x="456" y="223" width="1" height="131" fill="#000080"/>
<rect x="466" y="223" width="1" height="131" fill="#000080"/>
<rect x="477" y="223" width="1" height="131" fill="#0000ff"/>
<rect x="487" y="223" width="1" height="131" fill="#000080"/>
<rect x="497" y="223" width="1" height="131" fill="#000080"/>
<rect x="508" y="223" width="1" height="131" fill="#000080"/>
<rect x="518" y="223" width="1" height="131" fill="#000080"/>
<rect x="61" y="223" width="468" height="1" fill="#0000ff"/>
<rect x="59" y="223" width="2" height="1" fill="#0000ff"/>
<rect x="61" y="237" width="468" height="1" fill="#000080"/>
<rect x="60" y="237" width="1" height="1" fill="#0000ff"/>
<rect x="61" y="250" width="468" height="1" fill="#0000ff"/>
<rect x="59" y="250" width="2" height="1" fill="#0000ff"/>
<rect x="61" y="263" width="468" height="1" fill="#000080"/>
<rect x="60" y="263" width="1" height="1" fill="#0000ff"/>
<rect x="61" y="276" width="468" height="1" fill="#0000ff"/>
<rect x="59" y="276" width="2" height="1" fill="#0000ff"/>
<rect x="61" y="289" width="468" height="1" fill="#000080"/>
<rect x="60" y="289" width="1" height="1" fill="#0000ff"/>
<rect x="61" y="302" width="468" height="1" fill="#0000ff"/>
<rect x="59" y="302" width="2" height="1" fill="#0000ff"/>
<rect x="61" y="315" width="468" height="1" fill="#000080"/>
<rect x="60" y="315" width="1" height="1" fill="#0000ff"/>
<rect x="61" y="328" width="468" height="1" fill="#0000ff"/>
<rect x="59" y="328" width="2" height="1" fill="#0000ff"/>
<rect x="61" y="341" width="468" height="1" fill="#000080"/>
<rect x="60" y="341" width="1" height="1" fill="#0000ff"/>
<rect x="61" y="354" width="468" height="1" fill="#0000ff"/>
<rect x="59" y="354" width="2" height="1" fill="#0000ff"/>
<rect x="62" y="351" width="1" height="3" fill="#00ff00"/>
<rect x="66" y="351" width="1" height="3" fill="#00ff00"/>
<rect x="67" y="351" width="1" height="3" fill="#00ff00"/>
<rect x="80" y="351" width="1" height="3" fill="#00ff00"/>
<rect x="84" y="344" width="1" height="10" fill="#00ff00"/>
<rect x="85" y="347" width="1" height="7" fill="#00ff00"/>
<rect x="88" y="347" width="1" height="7" fill="#00ff00"/>
<rect x="111" y="341" width="1" height="13" fill="#00ff00"/>
<rect x="115" y="339" width="1" height="15" fill="#00ff00"/>
<rect x="119" y="347" width="1" height="7" fill="#00ff00"/>
<rect x="126" y="352" width="1" height="2" fill="#00ff00"/>
<rect x="153" y="341" width="1" height="13" fill="#00ff00"/>
<rect x="192" y="349" width="1" height="5" fill="#00ff00"/>
<rect x="216" y="352" width="1" height="2" fill="#00ff00"/>
<rect x="231" y="348" width="1" height="6" fill="#00ff00"/>
<rect x="247" y="346" width="1" height="8" fill="#00ff00"/>
<rect x="250" y="346" width="1" height="8" fill="#00ff00"/>
<rect x="262" y="352" width="1" height="2" fill="#00ff00"/>
<rect x="264" y="352" width="1" height="2" fill="#00ff00"/>
<rect x="283" y="352" width="1" height="2" fill="#00ff00"/>
<rect x="310" y="352" width="1" height="2" fill="#00ff00"/>
<rect x="317" y="352" width="1" height="2" fill="#00ff00"/>
<rect x="338" y="349" width="1" height="5" fill="#00ff00"/>
<rect x="339" y="351" width="1" height="3" fill="#00ff00"/>
<rect x="347" y="344" width="1" height="10" fill="#00ff00"/>
<rect x="347" y="344" width="1" height="10" fill="#00ff00"/>
<rect x="353" y="351" width="1" height="3" fill="#00ff00"/>
<rect x="354" y="351" width="1" height="3" fill="#00ff00"/>
<rect x="372" y="346" width="1" height="8" fill="#00ff00"/>
<rect x="386" y="351" width="1" height="3" fill="#00ff00"/>
<rect x="400" y="348" width="1" height="6" fill="#00ff00"/>
<rect x="402" y="351" width="1" height="3" fill="#00ff00"/>
<rect x="413" y="347" width="1" height="7" fill="#00ff00"/>
<rect x="414" y="350" width="1" height="4" fill="#00ff00"/>
<rect x="427" y="351" width="1" height="3" fill="#00ff00"/>
<rect x="434" y="351" width="1" height="3" fill="#00ff00"/>
<rect x="441" y="351" width="1" height="3" fill="#00ff00"/>
<rect x="443" y="351" width="1" height="3" fill="#00ff00"/>
<rect x="476" y="346" width="1" height="8" fill="#00ff00"/>
<rect x="478" y="351" width="1" height="3" fill="#00ff00"/>
<rect x="491" y="348" width="1" height="6" fill="#00ff00"/>
<rect x="492" y="350" width="1" height="4" fill="#00ff00"/>
<rect x="497" y="351" width="1" height="3" fill="#00ff00"/>
<rect x="503" y="350" width="2" height="4" fill="#00ff00"/>
<rect x="505" y="344" width="2" height="10" fill="#00ff00"/>
<rect x="507" y="329" width="1" height="25" fill="#ffff00"/>
<rect x="508" y="309" width="2" height="45" fill="#ffff00"/>
<rect x="510" y="294" width="1" height="60" fill="#ffff00"/>
<rect x="511" y="276" width="3" height="78" fill="#ff0000"/>
<rect x="512" y="266" width="1" height="10" fill="#ff0000"/>
<path d="M62 299h1v2h-1zM63 298h1v3h-1zM64 297h1v3h-1zM65 297h1v2h-1zM66 297h1v2h-1zM67 297h1v2h-1zM68 294h1v5h-1zM69 291h1v5h-1zM70 295h1v5h-1zM71 297h1v3h-1zM72 299h1v3h-1zM73 298h1v3h-1zM74 299h1v2h-1zM75 298h1v3h-1zM76 297h1v3h-1zM77 298h1v3h-1zM78 297h1v3h-1zM79 298h1v3h-1zM80 297h1v3h-1zM81 297h1v2h-1zM82 296h1v3h-1zM83 297h1v3h-1zM84 296h1v3h-1zM85 297h1v3h-1zM86 296h1v3h-1zM87 296h1v2h-1zM88 296h1v2h-1zM89 297h1v2h-1zM90 298h1v2h-1zM91 297h1v2h-1zM92 296h1v2h-1zM93 297h1v2h-1zM94 296h1v3h-1zM95 294h1v3h-1zM96 296h1v3h-1zM97 296h1v2h-1zM98 296h1v3h-1zM99 297h1v3h-1zM100 295h1v3h-1zM101 296h1v3h-1zM102 293h1v5h-1zM103 290h1v5h-1zM104 292h1v5h-1zM105 296h1v3h-1zM106 296h1v2h-1zM107 296h1v2h-1zM108 296h1v3h-1zM109 297h1v3h-1zM110 295h1v3h-1zM111 296h1v3h-1zM112 296h1v2h-1zM113 296h1v2h-1zM114 296h1v3h-1zM115 294h1v3h-1zM116 294h1v3h-1zM117 296h1v3h-1zM118 295h1v3h-1zM119 296h1v3h-1zM120 297h1v3h-1zM121 296h1v3h-1zM122 295h1v2h-1zM123 295h1v3h-1zM124 294h1v3h-1zM125 294h1v2h-1zM126 295h1v4h-1zM127 297h1v4h-1zM128 295h1v4h-1zM129 294h1v3h-1zM130 295h1v4h-1zM131 297h1v3h-1zM132 294h1v4h-1zM133 292h1v3h-1zM134 293h1v4h-1zM135 296h1v4h-1zM136 297h1v2h-1zM137 298h1v2h-1zM138 297h1v3h-1zM139 296h1v3h-1zM140 297h1v2h-1zM141 295h1v4h-1zM142 292h1v4h-1zM143 294h1v4h-1zM144 297h1v2h-1zM145 294h1v5h-1zM146 290h1v5h-1zM147 293h1v5h-1zM148 291h1v4h-1zM149 293h1v4h-1zM150 296h1v2h-1zM151 295h1v2h-1zM152 296h1v2h-1zM153 296h1v3h-1zM154 294h1v3h-1zM155 295h1v3h-1zM156 297h1v2h-1zM157 296h1v2h-1zM158 296h1v2h-1zM159 296h1v3h-1zM160 298h1v3h-1zM161 297h1v3h-1zM162 296h1v2h-1zM163 295h1v3h-1zM164 296h1v3h-1zM165 294h1v3h-1zM166 296h1v3h-1zM167 296h1v2h-1zM168 297h1v2h-1zM169 297h1v2h-1zM170 296h1v2h-1zM171 296h1v3h-1zM172 295h1v3h-1zM173 295h1v2h-1zM174 295h1v3h-1zM175 296h1v3h-1zM176 295h1v3h-1zM177 295h1v3h-1zM178 296h1v3h-1zM179 295h1v3h-1zM180 293h1v4h-1zM181 295h1v4h-1zM182 295h1v3h-1zM183 295h1v3h-1zM184 294h1v3h-1zM185 294h1v3h-1zM186 295h1v3h-1zM187 296h1v2h-1zM188 296h1v3h-1zM189 297h1v3h-1zM190 295h1v3h-1zM191 295h1v2h-1zM192 296h1v2h-1zM193 296h1v3h-1zM194 297h1v3h-1zM195 296h1v3h-1zM196 295h1v2h-1zM197 294h1v2h-1zM198 294h1v3h-1zM199 295h1v3h-1zM200 293h1v3h-1zM201 295h1v3h-1zM202 295h1v2h-1zM203 294h1v3h-1zM204 292h1v4h-1zM205 295h1v4h-1zM206 295h1v4h-1zM207 292h1v4h-1zM208 294h1v3h-1zM209 296h1v2h-1zM210 295h1v2h-1zM211 296h1v2h-1zM212 296h1v2h-1zM213 295h1v2h-1zM214 295h1v2h-1zM215 294h1v2h-1zM216 295h1v2h-1zM217 294h1v2h-1zM218 295h1v2h-1zM219 295h1v3h-1zM220 292h1v5h-1zM221 290h1v5h-1zM222 293h1v5h-1zM223 296h1v2h-1zM224 296h1v3h-1zM225 295h1v3h-1zM226 296h1v2h-1zM227 296h1v3h-1zM228 295h1v3h-1zM229 294h1v3h-1zM230 295h1v3h-1zM231 296h1v3h-1zM232 295h1v3h-1zM233 294h1v2h-1zM234 295h1v2h-1zM235 295h1v3h-1zM236 295h1v4h-1zM237 293h1v4h-1zM238 294h1v2h-1zM239 294h1v2h-1zM240 295h1v3h-1zM241 296h1v3h-1zM242 295h1v3h-1zM243 293h1v3h-1zM244 293h1v3h-1zM245 294h1v3h-1zM246 295h1v2h-1zM247 295h1v2h-1zM248 295h1v2h-1zM249 295h1v3h-1zM250 294h1v5h-1zM251 290h1v5h-1zM252 292h1v5h-1zM253 293h1v5h-1zM254 290h1v5h-1zM255 293h1v5h-1zM256 294h1v3h-1zM257 293h1v2h-1zM258 294h1v2h-1zM259 295h1v2h-1zM260 294h1v3h-1zM261 293h1v3h-1zM262 293h1v2h-1zM263 294h1v2h-1zM264 295h1v2h-1zM265 295h1v2h-1zM266 293h1v3h-1zM267 292h1v3h-1zM268 294h1v3h-1zM269 293h1v3h-1zM270 293h1v2h-1zM271 292h1v2h-1zM272 293h1v3h-1zM273 294h1v4h-1zM274 292h1v4h-1zM275 293h1v2h-1zM276 293h1v3h-1zM277 292h1v3h-1zM278 292h1v2h-1zM279 293h1v3h-1zM280 295h1v3h-1zM281 296h1v2h-1zM282 295h1v3h-1zM283 293h1v3h-1zM284 293h1v2h-1zM285 293h1v3h-1zM286 291h1v4h-1zM287 290h1v3h-1zM288 292h1v3h-1zM289 294h1v2h-1zM290 293h1v3h-1zM291 294h1v3h-1zM292 294h1v2h-1zM293 294h1v2h-1zM294 295h1v2h-1zM295 294h1v2h-1zM296 293h1v3h-1zM297 291h1v4h-1zM298 293h1v4h-1zM299 294h1v2h-1zM300 294h1v4h-1zM301 296h1v4h-1zM302 293h1v5h-1zM303 291h1v3h-1zM304 292h1v4h-1zM305 295h1v3h-1zM306 293h1v4h-1zM307 292h1v3h-1zM308 293h1v3h-1zM309 294h1v2h-1zM310 293h1v4h-1zM311 295h1v4h-1zM312 293h1v4h-1zM313 294h1v2h-1zM314 294h1v2h-1zM315 295h1v2h-1zM316 294h1v3h-1zM317 293h1v3h-1zM318 293h1v2h-1zM319 292h1v2h-1zM320 291h1v4h-1zM321 293h1v4h-1zM322 293h1v3h-1zM323 294h1v2h-1zM324 293h1v3h-1zM325 291h1v3h-1zM326 293h1v3h-1zM327 294h1v2h-1zM328 294h1v3h-1zM329 292h1v4h-1zM330 290h1v3h-1zM331 292h1v3h-1zM332 291h1v3h-1zM333 289h1v4h-1zM334 292h1v4h-1zM335 294h1v2h-1zM336 294h1v2h-1zM337 293h1v3h-1zM338 292h1v3h-1zM339 293h1v2h-1zM340 294h1v2h-1zM341 293h1v2h-1zM342 293h1v3h-1zM343 291h1v3h-1zM344 293h1v3h-1zM345 294h1v2h-1zM346 293h1v4h-1zM347 291h1v4h-1zM348 292h1v3h-1zM349 293h1v3h-1zM350 293h1v4h-1zM351 291h1v4h-1zM352 293h1v4h-1zM353 294h1v2h-1zM354 293h1v2h-1zM355 292h1v3h-1zM356 293h1v3h-1zM357 293h1v2h-1zM358 293h1v2h-1zM359 293h1v2h-1zM360 294h1v3h-1zM361 295h1v3h-1zM362 293h1v3h-1zM363 293h1v2h-1zM364 294h1v2h-1zM365 293h1v2h-1zM366 293h1v2h-1zM367 292h1v3h-1zM368 294h1v3h-1zM369 293h1v3h-1zM370 291h1v3h-1zM371 289h1v4h-1zM372 292h1v4h-1zM373 293h1v3h-1zM374 293h1v4h-1zM375 290h1v4h-1zM376 292h1v4h-1zM377 293h1v4h-1zM378 295h1v4h-1zM379 294h1v3h-1zM380 295h1v2h-1zM381 294h1v3h-1zM382 293h1v3h-1zM383 294h1v2h-1zM384 294h1v3h-1zM385 294h1v5h-1zM386 290h1v5h-1zM387 292h1v5h-1zM388 295h1v3h-1zM389 294h1v3h-1zM390 295h1v3h-1zM391 293h1v3h-1zM392 294h1v3h-1zM393 293h1v3h-1zM394 294h1v3h-1zM395 294h1v2h-1zM396 294h1v2h-1zM397 294h1v2h-1zM398 295h1v2h-1zM399 294h1v2h-1zM400 294h1v2h-1zM401 294h1v2h-1zM402 295h1v2h-1zM403 293h1v3h-1zM404 292h1v3h-1zM405 294h1v3h-1zM406 293h1v3h-1zM407 293h1v2h-1zM408 293h1v2h-1zM409 292h1v2h-1zM410 292h1v2h-1zM411 293h1v2h-1zM412 293h1v3h-1zM413 292h1v3h-1zM414 294h1v3h-1zM415 294h1v2h-1zM416 294h1v2h-1zM417 294h1v2h-1zM418 295h1v2h-1zM419 294h1v2h-1zM420 293h1v3h-1zM421 292h1v3h-1zM422 293h1v3h-1zM423 292h1v3h-1zM424 293h1v3h-1zM425 294h1v2h-1zM426 294h1v2h-1zM427 293h1v2h-1zM428 293h1v3h-1zM429 292h1v3h-1zM430 293h1v2h-1zM431 293h1v2h-1zM432 292h1v3h-1zM433 294h1v3h-1zM434 292h1v3h-1zM435 294h1v3h-1zM436 291h1v4h-1zM437 290h1v3h-1zM438 291h1v3h-1zM439 293h1v3h-1zM440 292h1v3h-1zM441 293h1v3h-1zM442 295h1v2h-1zM443 294h1v2h-1zM444 294h1v2h-1zM445 294h1v2h-1zM446 293h1v2h-1zM447 293h1v2h-1zM448 293h1v2h-1zM449 292h1v4h-1zM450 295h1v4h-1zM451 294h1v3h-1zM452 293h1v2h-1zM453 294h1v2h-1zM454 294h1v2h-1zM455 294h1v2h-1zM456 294h1v2h-1zM457 294h1v2h-1zM458 293h1v2h-1zM459 293h1v2h-1zM460 294h1v2h-1zM461 294h1v2h-1zM462 293h1v3h-1zM463 294h1v4h-1zM464 291h1v4h-1zM465 291h1v4h-1zM466 294h1v4h-1zM467 293h1v4h-1zM468 291h1v3h-1zM469 292h1v3h-1zM470 294h1v3h-1zM471 295h1v3h-1zM472 295h1v2h-1zM473 295h1v2h-1zM474 294h1v3h-1zM475 292h1v3h-1zM476 293h1v3h-1zM477 293h1v3h-1zM478 294h1v3h-1zM479 294h1v4h-1zM480 291h1v4h-1zM481 292h1v4h-1zM482 294h1v3h-1zM483 294h1v2h-1zM484 294h1v2h-1zM485 293h1v2h-1zM486 293h1v3h-1zM487 293h1v4h-1zM488 291h1v4h-1zM489 293h1v3h-1zM490 293h1v4h-1zM491 296h1v4h-1zM492 293h1v5h-1zM493 290h1v4h-1zM494 292h1v4h-1zM495 294h1v3h-1zM496 293h1v3h-1zM497 293h1v3h-1zM498 294h1v3h-1zM499 294h1v2h-1zM500 293h1v2h-1zM501 293h1v3h-1zM502 292h1v3h-1zM503 294h1v3h-1zM504 292h1v3h-1zM505 292h1v2h-1zM506 291h1v2h-1zM507 290h1v2h-1zM508 289h1v2h-1zM509 288h1v2h-1z" fill="#ff00ff"/>
<rect x="514" y="223" width="1" height="132" fill="#c8c8c8"/>
</svg>
<div class="sq" style="left:18px;top:375px;width:170px;height:62px"></div>
<div class="lg" style="left:26px;top:369px;width:64px"></div>
<div style="left:28px;top:371px;width:8px;height:8px;background:#00ffff;border:1px solid #000;box-sizing:border-box"></div>
<div class="sq" style="left:198px;top:375px;width:170px;height:62px"></div>
<div class="lg" style="left:207px;top:369px;width:74px"></div>
<div style="left:208px;top:371px;width:8px;height:8px;background:#ffff00;border:1px solid #000;box-sizing:border-box"></div>
<div class="sq" style="left:379px;top:375px;width:170px;height:46px"></div>
<div class="lg" style="left:387px;top:369px;width:41px"></div>
<div style="left:389px;top:371px;width:8px;height:8px;background:#ff00ff;border:1px solid #000;box-sizing:border-box"></div>
<div class="btn" style="left:562px;top:59px;width:68px;height:19px"><i></i></div>
<div class="btn" style="left:654px;top:59px;width:68px;height:19px"><i></i><div style="left:1px;top:1px;right:1px;bottom:1px;border:1px dotted #000;border-top-color:#a00000;border-bottom-color:#a0a000"></div></div>
<div class="grp" style="left:561px;top:88px;width:162px;height:68px"></div>
<div class="lg" style="left:569px;top:82px;width:60px"></div>
<div class="grp" style="left:561px;top:161px;width:162px;height:179px"></div>
<div class="lg" style="left:568px;top:155px;width:45px"></div>
<div class="grp" style="left:561px;top:344px;width:162px;height:24px"></div>
<div class="grp" style="left:561px;top:374px;width:162px;height:63px"></div>
<div class="inp" style="left:631px;top:170px;width:82px;height:20px;border-color:#808080"></div>
<div style="left:695px;top:170px;width:17px;height:20px;background:#fff;border:1px solid #808080;border-radius:2px;box-sizing:border-box"><div style="left:1px;right:1px;top:7px;height:9px;background:#c0c0c0"></div></div>
<svg style="left:698px;top:176px" width="11" height="8" viewBox="0 0 11 8"><path d="M1.3 1.3 L5.5 5.6 L9.7 1.3" stroke="#000" stroke-width="2.3" fill="none"/></svg>
<div class="inp" style="left:631px;top:194px;width:70px;height:18px"></div>
<div class="inp" style="left:631px;top:217px;width:70px;height:18px"></div>
<div class="cb" style="left:569px;top:242px"></div>
<div class="cb" style="left:569px;top:261px"></div>
<svg style="left:569px;top:261px" width="13" height="13" viewBox="0 0 13 13"><path d="M3 6 L5.5 8.7 L10 3.8" stroke="#008000" stroke-width="2.2" fill="none"/></svg>
<div class="cb" style="left:569px;top:276px"></div>
<svg style="left:569px;top:276px" width="13" height="13" viewBox="0 0 13 13"><path d="M3 6 L5.5 8.7 L10 3.8" stroke="#008000" stroke-width="2.2" fill="none"/></svg>
<div class="cb" style="left:569px;top:291px"></div>
<svg style="left:569px;top:291px" width="13" height="13" viewBox="0 0 13 13"><path d="M3 6 L5.5 8.7 L10 3.8" stroke="#008000" stroke-width="2.2" fill="none"/></svg>
<div class="cb" style="left:569px;top:306px"></div>
<svg style="left:569px;top:306px" width="13" height="13" viewBox="0 0 13 13"><path d="M3 6 L5.5 8.7 L10 3.8" stroke="#008000" stroke-width="2.2" fill="none"/></svg>
<div class="cb" style="left:569px;top:321px"></div>
<svg style="left:569px;top:321px" width="13" height="13" viewBox="0 0 13 13"><path d="M3 6 L5.5 8.7 L10 3.8" stroke="#008000" stroke-width="2.2" fill="none"/></svg>
<svg style="left:0;top:0" width="8" height="8" viewBox="0 0 8 8" shape-rendering="crispEdges"><path d="M0 0H6L0 6Z" fill="#fff"/><path d="M6 0H8V1H6V2H5V3H4V4H3V5H2V6H1V8H0V5H1V4H2V3H3V2H4V1H5V0Z" fill="#808080"/><path d="M6 2H8V3H6V4H5V5H4V6H3V7H2V8H1V6H2V5H3V4H4V3H5V2Z" fill="#fff"/></svg>
<svg style="left:735px;top:0" width="8" height="8" viewBox="0 0 8 8" shape-rendering="crispEdges"><g transform="translate(8,0) scale(-1,1)"><path d="M0 0H6L0 6Z" fill="#c0c0c0"/><path d="M6 0H8V1H6V2H5V3H4V4H3V5H2V6H1V8H0V5H1V4H2V3H3V2H4V1H5V0Z" fill="#808080"/><path d="M6 2H8V3H6V4H5V5H4V6H3V7H2V8H1V6H2V5H3V4H4V3H5V2Z" fill="#fff"/></g></svg>
<div id="txt" style="left:0;top:0;width:743px;height:449px;will-change:transform">
<span class="t" id="t0" style="top:7.00px;font-size:13px;line-height:17px;letter-spacing:0.261px;color:#000;word-spacing:1.139px;font-weight:bold;left:6.50px;">CD Speed : Disc Quality Test</span>
<span class="t" id="t1" style="top:7.00px;font-size:13px;line-height:17px;letter-spacing:0.000px;color:#000;font-weight:bold;left:202.80px;"><span class="k" style="transform:scaleX(1.75)">-</span></span>
<span class="t" id="t2" style="top:7.00px;font-size:13px;line-height:17px;letter-spacing:-0.350px;color:#000;font-weight:bold;left:216.40px;transform:scaleX(0.9312);transform-origin:0 50%;">BENQ</span>
<span class="t" id="t3" style="top:7.00px;font-size:13px;line-height:17px;letter-spacing:0.017px;color:#000;word-spacing:1.383px;font-weight:bold;left:271.50px;">DVD DD DW1620</span>
<span class="t" id="t4" style="top:7.00px;font-size:13px;line-height:17px;letter-spacing:0.156px;color:#000;font-weight:bold;left:398.50px;">B7V9</span>
<span class="t" id="t5" style="top:36.84px;font-size:12px;line-height:16px;letter-spacing:-0.139px;color:#000;word-spacing:0.809px;left:21.50px;">Disc Quality</span>
<span class="t" id="t6" style="top:55.84px;font-size:12px;line-height:16px;letter-spacing:-0.260px;color:#000;word-spacing:0.930px;left:290.80px;">recorded with TEAC</span>
<span class="t" id="t7" style="top:55.84px;font-size:12px;line-height:16px;letter-spacing:-0.308px;color:#000;left:410.50px;">DV-W516E</span>
<span class="t" id="t8" style="top:55.84px;font-size:12px;line-height:16px;letter-spacing:-0.172px;color:#000;left:501.80px;">v1.0B</span>
<span class="t" id="t9" style="top:64.84px;font-size:12px;line-height:16px;letter-spacing:-0.750px;color:#000;right:688.64px;transform:scaleX(0.9834);transform-origin:100% 50%;">50</span>
<span class="t" id="t10" style="top:214.84px;font-size:12px;line-height:16px;letter-spacing:-0.750px;color:#000;right:688.64px;transform:scaleX(0.9834);transform-origin:100% 50%;">50</span>
<span class="t" id="t11" style="top:91.84px;font-size:12px;line-height:16px;letter-spacing:-0.750px;color:#000;right:688.64px;transform:scaleX(0.9834);transform-origin:100% 50%;">40</span>
<span class="t" id="t12" style="top:241.84px;font-size:12px;line-height:16px;letter-spacing:-0.750px;color:#000;right:688.64px;transform:scaleX(0.9834);transform-origin:100% 50%;">40</span>
<span class="t" id="t13" style="top:117.84px;font-size:12px;line-height:16px;letter-spacing:-0.750px;color:#000;right:688.64px;transform:scaleX(0.9834);transform-origin:100% 50%;">30</span>
<span class="t" id="t14" style="top:267.84px;font-size:12px;line-height:16px;letter-spacing:-0.750px;color:#000;right:688.64px;transform:scaleX(0.9834);transform-origin:100% 50%;">30</span>
<span class="t" id="t15" style="top:143.84px;font-size:12px;line-height:16px;letter-spacing:-0.750px;color:#000;right:688.64px;transform:scaleX(0.9834);transform-origin:100% 50%;">20</span>
<span class="t" id="t16" style="top:293.84px;font-size:12px;line-height:16px;letter-spacing:-0.750px;color:#000;right:688.64px;transform:scaleX(0.9834);transform-origin:100% 50%;">20</span>
<span class="t" id="t17" style="top:169.84px;font-size:12px;line-height:16px;letter-spacing:-0.750px;color:#000;right:688.64px;transform:scaleX(0.9834);transform-origin:100% 50%;">10</span>
<span class="t" id="t18" style="top:319.84px;font-size:12px;line-height:16px;letter-spacing:-0.750px;color:#000;right:688.64px;transform:scaleX(0.9834);transform-origin:100% 50%;">10</span>
<span class="t" id="t19" style="top:204.84px;font-size:12px;line-height:16px;letter-spacing:-0.750px;color:#000;left:56.30px;transform:scaleX(0.9416);transform-origin:0 50%;">0.0</span>
<span class="t" id="t20" style="top:355.24px;font-size:12px;line-height:16px;letter-spacing:-0.750px;color:#000;left:56.30px;transform:scaleX(0.9416);transform-origin:0 50%;">0.0</span>
<span class="t" id="t21" style="top:204.84px;font-size:12px;line-height:16px;letter-spacing:-0.750px;color:#000;left:107.50px;transform:scaleX(0.9416);transform-origin:0 50%;">0.5</span>
<span class="t" id="t22" style="top:355.24px;font-size:12px;line-height:16px;letter-spacing:-0.750px;color:#000;left:107.50px;transform:scaleX(0.9416);transform-origin:0 50%;">0.5</span>
<span class="t" id="t23" style="top:204.84px;font-size:12px;line-height:16px;letter-spacing:-0.750px;color:#000;left:159.40px;transform:scaleX(0.9416);transform-origin:0 50%;">1.0</span>
<span class="t" id="t24" style="top:355.24px;font-size:12px;line-height:16px;letter-spacing:-0.750px;color:#000;left:159.40px;transform:scaleX(0.9416);transform-origin:0 50%;">1.0</span>
<span class="t" id="t25" style="top:204.84px;font-size:12px;line-height:16px;letter-spacing:-0.750px;color:#000;left:211.30px;transform:scaleX(0.9416);transform-origin:0 50%;">1.5</span>
<span class="t" id="t26" style="top:355.24px;font-size:12px;line-height:16px;letter-spacing:-0.750px;color:#000;left:211.30px;transform:scaleX(0.9416);transform-origin:0 50%;">1.5</span>
<span class="t" id="t27" style="top:204.84px;font-size:12px;line-height:16px;letter-spacing:-0.750px;color:#000;left:263.20px;transform:scaleX(0.9416);transform-origin:0 50%;">2.0</span>
<span class="t" id="t28" style="top:355.24px;font-size:12px;line-height:16px;letter-spacing:-0.750px;color:#000;left:263.20px;transform:scaleX(0.9416);transform-origin:0 50%;">2.0</span>
<span class="t" id="t29" style="top:204.84px;font-size:12px;line-height:16px;letter-spacing:-0.750px;color:#000;left:315.10px;transform:scaleX(0.9416);transform-origin:0 50%;">2.5</span>
<span class="t" id="t30" style="top:355.24px;font-size:12px;line-height:16px;letter-spacing:-0.750px;color:#000;left:315.10px;transform:scaleX(0.9416);transform-origin:0 50%;">2.5</span>
<span class="t" id="t31" style="top:204.84px;font-size:12px;line-height:16px;letter-spacing:-0.750px;color:#000;left:367.00px;transform:scaleX(0.9416);transform-origin:0 50%;">3.0</span>
<span class="t" id="t32" style="top:355.24px;font-size:12px;line-height:16px;letter-spacing:-0.750px;color:#000;left:367.00px;transform:scaleX(0.9416);transform-origin:0 50%;">3.0</span>
<span class="t" id="t33" style="top:204.84px;font-size:12px;line-height:16px;letter-spacing:-0.750px;color:#000;left:418.90px;transform:scaleX(0.9416);transform-origin:0 50%;">3.5</span>
<span class="t" id="t34" style="top:355.24px;font-size:12px;line-height:16px;letter-spacing:-0.750px;color:#000;left:418.90px;transform:scaleX(0.9416);transform-origin:0 50%;">3.5</span>
<span class="t" id="t35" style="top:204.84px;font-size:12px;line-height:16px;letter-spacing:-0.750px;color:#000;left:470.80px;transform:scaleX(0.9416);transform-origin:0 50%;">4.0</span>
<span class="t" id="t36" style="top:355.24px;font-size:12px;line-height:16px;letter-spacing:-0.750px;color:#000;left:470.80px;transform:scaleX(0.9416);transform-origin:0 50%;">4.0</span>
<span class="t" id="t37" style="top:204.84px;font-size:12px;line-height:16px;letter-spacing:-0.750px;color:#000;left:523.40px;transform:scaleX(0.9416);transform-origin:0 50%;">4.5</span>
<span class="t" id="t38" style="top:355.24px;font-size:12px;line-height:16px;letter-spacing:-0.750px;color:#000;left:523.40px;transform:scaleX(0.9416);transform-origin:0 50%;">4.5</span>
<span class="t" id="t39" style="top:181.84px;font-size:12px;line-height:16px;letter-spacing:-0.487px;color:#000;left:532.80px;">2</span>
<span class="t" id="t40" style="top:165.84px;font-size:12px;line-height:16px;letter-spacing:-0.487px;color:#000;left:532.80px;">4</span>
<span class="t" id="t41" style="top:150.84px;font-size:12px;line-height:16px;letter-spacing:-0.487px;color:#000;left:532.80px;">6</span>
<span class="t" id="t42" style="top:135.84px;font-size:12px;line-height:16px;letter-spacing:-0.487px;color:#000;left:532.80px;">8</span>
<span class="t" id="t43" style="top:119.84px;font-size:12px;line-height:16px;letter-spacing:-0.750px;color:#000;left:532.80px;transform:scaleX(0.9675);transform-origin:0 50%;">10</span>
<span class="t" id="t44" style="top:104.84px;font-size:12px;line-height:16px;letter-spacing:-0.750px;color:#000;left:532.80px;transform:scaleX(0.9675);transform-origin:0 50%;">12</span>
<span class="t" id="t45" style="top:89.84px;font-size:12px;line-height:16px;letter-spacing:-0.750px;color:#000;left:532.80px;transform:scaleX(0.9675);transform-origin:0 50%;">14</span>
<span class="t" id="t46" style="top:73.84px;font-size:12px;line-height:16px;letter-spacing:-0.750px;color:#000;left:532.80px;transform:scaleX(0.9675);transform-origin:0 50%;">16</span>
<span class="t" id="t47" style="top:215.84px;font-size:12px;line-height:16px;letter-spacing:-0.750px;color:#000;left:532.30px;transform:scaleX(0.9834);transform-origin:0 50%;">20</span>
<span class="t" id="t48" style="top:241.84px;font-size:12px;line-height:16px;letter-spacing:-0.750px;color:#000;left:532.30px;transform:scaleX(0.9834);transform-origin:0 50%;">16</span>
<span class="t" id="t49" style="top:267.84px;font-size:12px;line-height:16px;letter-spacing:-0.750px;color:#000;left:532.30px;transform:scaleX(0.9834);transform-origin:0 50%;">12</span>
<span class="t" id="t50" style="top:294.84px;font-size:12px;line-height:16px;letter-spacing:-0.487px;color:#000;left:532.30px;">8</span>
<span class="t" id="t51" style="top:320.84px;font-size:12px;line-height:16px;letter-spacing:-0.487px;color:#000;left:532.30px;">4</span>
<span class="t" id="t52" style="top:366.84px;font-size:12px;line-height:16px;letter-spacing:-0.431px;color:#000;word-spacing:1.101px;left:39.90px;">PI Errors</span>
<span class="t" id="t53" style="top:366.84px;font-size:12px;line-height:16px;letter-spacing:-0.314px;color:#000;word-spacing:0.984px;left:219.80px;">PI Failures</span>
<span class="t" id="t54" style="top:366.84px;font-size:12px;line-height:16px;letter-spacing:-0.163px;color:#000;left:402.40px;">Jitter</span>
<span class="t" id="t55" style="top:381.14px;font-size:12px;line-height:16px;letter-spacing:0.000px;color:#000;left:26.50px;">平均:</span>
<span class="t" id="t56" style="top:399.14px;font-size:12px;line-height:16px;letter-spacing:0.000px;color:#000;left:26.50px;">最大:</span>
<span class="t" id="t57" style="top:381.14px;font-size:12px;line-height:16px;letter-spacing:0.000px;color:#000;left:208.10px;">平均:</span>
<span class="t" id="t58" style="top:399.14px;font-size:12px;line-height:16px;letter-spacing:0.000px;color:#000;left:208.10px;">最大:</span>
<span class="t" id="t59" style="top:381.14px;font-size:12px;line-height:16px;letter-spacing:0.000px;color:#000;left:388.90px;">平均:</span>
<span class="t" id="t60" style="top:399.14px;font-size:12px;line-height:16px;letter-spacing:0.000px;color:#000;left:388.90px;">最大:</span>
<span class="t" id="t61" style="top:417.14px;font-size:12px;line-height:16px;letter-spacing:0.000px;color:#000;left:26.50px;">合計 :</span>
<span class="t" id="t62" style="top:417.14px;font-size:12px;line-height:16px;letter-spacing:0.000px;color:#000;left:208.10px;">合計 :</span>
<span class="t" id="t63" style="top:380.84px;font-size:12px;line-height:16px;letter-spacing:-0.750px;color:#000080;right:567.25px;transform:scaleX(0.9948);transform-origin:100% 50%;">2.89</span>
<span class="t" id="t64" style="top:398.84px;font-size:12px;line-height:16px;letter-spacing:-0.750px;color:#000080;right:567.24px;transform:scaleX(0.9834);transform-origin:100% 50%;">22</span>
<span class="t" id="t65" style="top:416.84px;font-size:12px;line-height:16px;letter-spacing:-0.669px;color:#000080;right:567.17px;">27960</span>
<span class="t" id="t66" style="top:380.84px;font-size:12px;line-height:16px;letter-spacing:-0.750px;color:#000080;right:385.49px;transform:scaleX(0.9238);transform-origin:100% 50%;">0.31</span>
<span class="t" id="t67" style="top:398.84px;font-size:12px;line-height:16px;letter-spacing:-0.750px;color:#000080;right:385.54px;transform:scaleX(0.9834);transform-origin:100% 50%;">34</span>
<span class="t" id="t68" style="top:416.84px;font-size:12px;line-height:16px;letter-spacing:-0.701px;color:#000080;right:385.50px;">3249</span>
<span class="t" id="t69" style="top:380.84px;font-size:12px;line-height:16px;letter-spacing:-0.750px;color:#000080;word-spacing:1.420px;right:204.19px;transform:scaleX(0.9135);transform-origin:100% 50%;">8.70 %</span>
<span class="t" id="t70" style="top:398.84px;font-size:12px;line-height:16px;letter-spacing:-0.750px;color:#000080;word-spacing:1.420px;right:204.19px;transform:scaleX(0.9135);transform-origin:100% 50%;">10.3 %</span>
<span class="t" id="t71" style="top:422.34px;font-size:12px;line-height:16px;letter-spacing:-0.536px;color:#000;word-spacing:1.206px;left:388.80px;">PO Failures:</span>
<span class="t" id="t72" style="top:422.34px;font-size:12px;line-height:16px;letter-spacing:-0.468px;color:#000080;right:204.77px;">5405</span>
<span class="t" id="t73" style="top:59.84px;font-size:12px;line-height:16px;letter-spacing:0.000px;color:#000;left:583.10px;">開始</span>
<span class="t" id="t74" style="top:59.84px;font-size:12px;line-height:16px;letter-spacing:0.000px;color:#000;left:667.30px;">終了<span style="letter-spacing:-0.5px;margin-right:0.5px">(</span><span style="letter-spacing:-0.5px;margin-right:0.5px"><u>X</u></span>)</span>
<span class="t" id="t75" style="top:79.84px;font-size:12px;line-height:16px;letter-spacing:0.000px;color:#0000ff;left:569.30px;"><span class="k" style="transform:scaleX(0.74);margin-right:-12.48px">ディスク</span>情報</span>
<span class="t" id="t76" style="top:92.84px;font-size:12px;line-height:16px;letter-spacing:0.000px;color:#000;left:568.10px;"><span class="k" style="transform:scaleX(0.74);margin-right:-9.36px">タイプ</span>:</span>
<span class="t" id="t77" style="top:107.84px;font-size:12px;line-height:16px;letter-spacing:-0.750px;color:#000;left:568.10px;transform:scaleX(0.9968);transform-origin:0 50%;">ID:</span>
<span class="t" id="t78" style="top:122.84px;font-size:12px;line-height:16px;letter-spacing:0.000px;color:#000;left:568.10px;">日付:</span>
<span class="t" id="t79" style="top:137.84px;font-size:12px;line-height:16px;letter-spacing:-0.521px;color:#000;left:568.10px;">Label:</span>
<span class="t" id="t80" style="top:92.84px;font-size:12px;line-height:16px;letter-spacing:-0.629px;color:#000080;left:617.30px;">DVD+R</span>
<span class="t" id="t81" style="top:107.84px;font-size:12px;line-height:16px;letter-spacing:-0.750px;color:#000080;word-spacing:1.420px;left:616.80px;transform:scaleX(0.9785);transform-origin:0 50%;">YUDEN000 T01</span>
<span class="t" id="t82" style="top:122.84px;font-size:12px;line-height:16px;letter-spacing:-0.681px;color:#000080;word-spacing:1.351px;left:616.80px;">2 March 2005</span>
<span class="t" id="t83" style="top:137.84px;font-size:12px;line-height:16px;letter-spacing:-0.646px;color:#000080;left:617.30px;">DVD_TESTDATA</span>
<span class="t" id="t84" style="top:152.84px;font-size:12px;line-height:16px;letter-spacing:-0.166px;color:#0000ff;left:568.80px;">Settings</span>
<span class="t" id="t85" style="top:170.84px;font-size:12px;line-height:16px;letter-spacing:0.000px;color:#000;left:568.10px;">転送速度</span>
<span class="t" id="t86" style="top:196.84px;font-size:12px;line-height:16px;letter-spacing:0.000px;color:#000;left:568.10px;">開始</span>
<span class="t" id="t87" style="top:218.84px;font-size:12px;line-height:16px;letter-spacing:0.000px;color:#000;left:568.10px;">終了位置</span>
<span class="t" id="t88" style="top:172.34px;font-size:12px;line-height:16px;letter-spacing:-0.008px;color:#000;left:634.20px;">6 X</span>
<span class="t" id="t89" style="top:194.84px;font-size:12px;line-height:16px;letter-spacing:-0.640px;color:#000;word-spacing:1.310px;left:633.20px;">0000 MB</span>
<span class="t" id="t90" style="top:217.84px;font-size:12px;line-height:16px;letter-spacing:-0.640px;color:#000;word-spacing:1.310px;left:633.20px;">4464 MB</span>
<span class="t" id="t91" style="top:240.84px;font-size:12px;line-height:16px;letter-spacing:-0.416px;color:#000;word-spacing:1.086px;left:584.20px;">Quick Scan</span>
<span class="t" id="t92" style="top:259.84px;font-size:12px;line-height:16px;letter-spacing:-0.394px;color:#000;word-spacing:1.064px;left:584.20px;">Show C1/PIE</span>
<span class="t" id="t93" style="top:274.84px;font-size:12px;line-height:16px;letter-spacing:-0.319px;color:#000;word-spacing:0.989px;left:584.20px;">Show C2/PIF</span>
<span class="t" id="t94" style="top:289.84px;font-size:12px;line-height:16px;letter-spacing:-0.070px;color:#000;word-spacing:0.740px;left:584.20px;">Show Jitter</span>
<span class="t" id="t95" style="top:304.84px;font-size:12px;line-height:16px;letter-spacing:-0.702px;color:#000;word-spacing:1.372px;left:584.20px;">Show Read Speed</span>
<span class="t" id="t96" style="top:319.84px;font-size:12px;line-height:16px;letter-spacing:-0.578px;color:#000;word-spacing:1.248px;left:584.20px;">Show Write Speed</span>
<span class="t" id="t97" style="top:347.84px;font-size:12px;line-height:16px;letter-spacing:0.000px;color:#000;left:568.10px;">品質<span class="k" style="transform:scaleX(0.73);margin-right:-9.72px">スコア</span>:</span>
<span class="t" id="t98" style="top:348.34px;font-size:12px;line-height:16px;letter-spacing:-0.487px;color:#000080;right:35.99px;">0</span>
<span class="t" id="t99" style="top:379.84px;font-size:12px;line-height:16px;letter-spacing:0.000px;color:#000;left:568.10px;">進行状況:</span>
<span class="t" id="t100" style="top:399.44px;font-size:12px;line-height:16px;letter-spacing:0.000px;color:#000;left:568.10px;"><span class="k" style="transform:scaleX(0.745);margin-right:-15.30px">ポジション</span>:</span>
<span class="t" id="t101" style="top:416.84px;font-size:12px;line-height:16px;letter-spacing:0.000px;color:#000;left:568.10px;">速度:</span>
<span class="t" id="t102" style="top:380.34px;font-size:12px;line-height:16px;letter-spacing:-0.750px;color:#000080;word-spacing:1.420px;right:34.89px;transform:scaleX(0.9245);transform-origin:100% 50%;">100 %</span>
<span class="t" id="t103" style="top:398.84px;font-size:12px;line-height:16px;letter-spacing:-0.540px;color:#000080;word-spacing:1.210px;right:34.74px;">4462 MB</span>
<span class="t" id="t104" style="top:417.34px;font-size:12px;line-height:16px;letter-spacing:-0.750px;color:#000080;word-spacing:1.420px;right:34.94px;transform:scaleX(0.9885);transform-origin:100% 50%;">3.90 X</span>
</div>
</div></body></html>
